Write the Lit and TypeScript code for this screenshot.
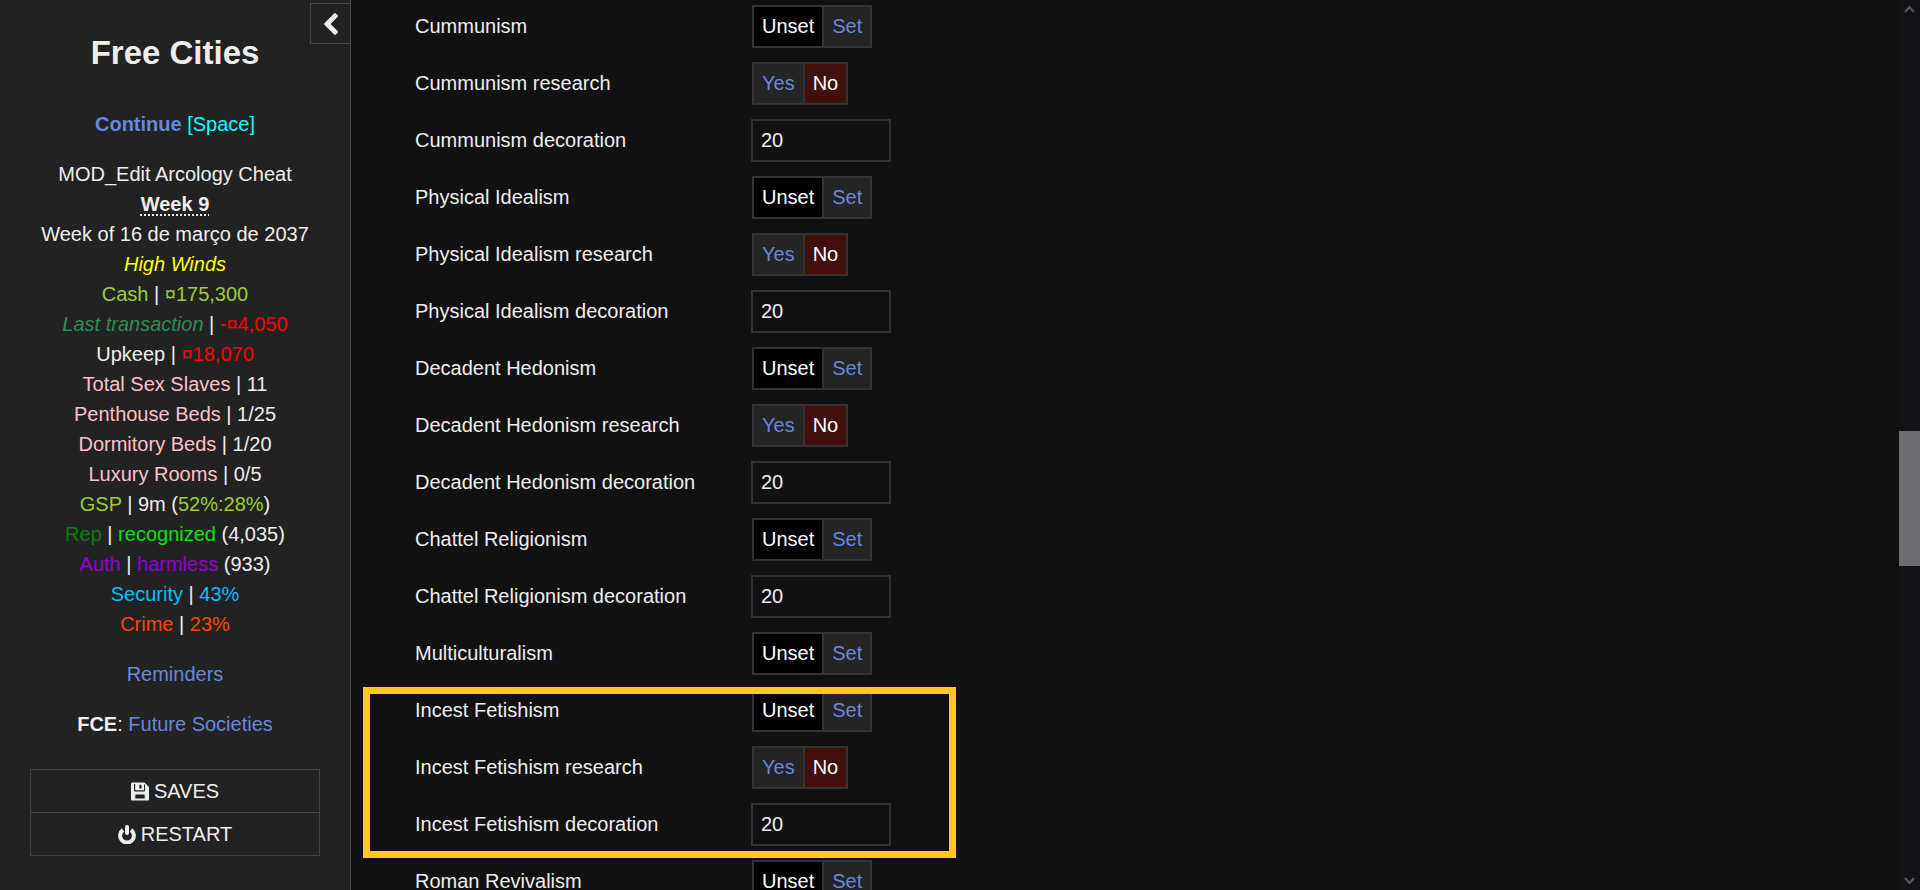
import { LitElement, html, css, svg } from "lit";
import { customElement, property, state } from "lit/decorators.js";
import { classMap } from "lit/directives/class-map.js";

type Kind = "set" | "research" | "decoration";
interface Setting {
  name: string;
  kind: Kind;
}

const settingsOf = (name: string, ...kinds: Kind[]): Setting[] =>
  kinds.map((kind) => ({ name: kind === "set" ? name : `${name} ${kind}`, kind }));

const groups: { highlighted: boolean; settings: Setting[] }[] = [
  {
    highlighted: false,
    settings: [
      ...settingsOf("Cummunism", "set", "research", "decoration"),
      ...settingsOf("Physical Idealism", "set", "research", "decoration"),
      ...settingsOf("Decadent Hedonism", "set", "research", "decoration"),
      ...settingsOf("Chattel Religionism", "set", "decoration"),
      ...settingsOf("Multiculturalism", "set"),
    ],
  },
  { highlighted: true, settings: settingsOf("Incest Fetishism", "set", "research", "decoration") },
  { highlighted: false, settings: settingsOf("Roman Revivalism", "set") },
];

const icons = {
  left: svg`<path d="M1171 301L640 832l531 531q19 19 19 45t-19 45l-166 166q-19 19-45 19t-45-19L173 877q-19-19-19-45t19-45L915 45q19-19 45-19t45 19l166 166q19 19 19 45t-19 45z"/>`,
  floppy: svg`<path fill-rule="evenodd" d="M1 0h12.500L18 4.500V17a1 1 0 0 1-1 1H1a1 1 0 0 1-1-1V1a1 1 0 0 1 1-1zM3 1.500V8q0 1 1 1h9q1 0 1-1V2.500l-1-1V7.700H4.200V1.500zM8.300 2.300V6h2.200V2.300zM4.300 12v4h9.400v-4z"/>`,
  power: svg`<path d="M5 5A6.900 6.900 0 1 0 13 5" fill="none" stroke="#eee" stroke-width="4"/><path d="M9 2V8" fill="none" stroke="#eee" stroke-width="4" stroke-linecap="round"/>`,
};

@customElement("setting-row")
class SettingRow extends LitElement {
  @property({ attribute: false }) setting!: Setting;
  @state() private choice = "";

  static styles = css`
    :host {
      display: grid;
      grid-template-columns: 336px 140px;
      align-items: center;
    }
    .toggle {
      display: flex;
      padding: 0 1px;
    }
    button {
      box-sizing: border-box;
      height: 43px;
      margin: 0;
      padding: 0 8px;
      border: 2px solid #333;
      background: #242424;
      color: #68d;
      font: inherit;
      cursor: pointer;
    }
    button + button {
      border-left: 0;
    }
    .chosen {
      background: #000;
      color: #fff;
    }
    .chosen.no {
      background: #410f0c;
    }
    input {
      box-sizing: border-box;
      width: 100%;
      height: 43px;
      margin: 0;
      padding: 0 8px;
      border: 2px solid #333;
      background: transparent;
      color: #eee;
      font: inherit;
    }
  `;

  render() {
    const { name, kind } = this.setting;
    if (kind === "decoration") {
      return html`<label for="value">${name}</label><input id="value" type="text" value="20" />`;
    }
    const options = kind === "set" ? ["Unset", "Set"] : ["Yes", "No"];
    const current = this.choice || (kind === "set" ? "Unset" : "No");
    return html`
      <span id="name">${name}</span>
      <div class="toggle" role="group" aria-labelledby="name">
        ${options.map(
          (option) => html`<button
            type="button"
            aria-pressed=${option === current}
            class=${classMap({ chosen: option === current, no: option === "No" })}
            @click=${() => (this.choice = option)}
          >${option}</button>`
        )}
      </div>
    `;
  }
}

@customElement("side-bar")
class SideBar extends LitElement {
  static styles = css`
    :host {
      box-sizing: border-box;
      position: relative;
      display: block;
      width: 351px;
      flex: none;
      padding: 34px 30px 0;
      border-right: 1px solid #444;
      background: #222;
      text-align: center;
      line-height: 30px;
    }
    .collapse {
      position: absolute;
      top: 3px;
      right: 0;
      display: flex;
      align-items: center;
      justify-content: center;
      width: 40px;
      height: 41px;
      padding: 0;
      border: 1px solid #444;
      border-right: 0;
      background: transparent;
    }
    svg {
      fill: #eee;
    }
    .chevron {
      width: 16px;
      height: 22px;
    }
    h1 {
      margin: 0 0 37px;
      font-size: 33px;
      line-height: 38px;
    }
    p {
      margin: 0 0 20px;
      white-space: nowrap;
    }
    a {
      color: #68d;
      text-decoration: none;
    }
    abbr {
      font-weight: bold;
      text-decoration: underline dotted;
      text-underline-offset: 3px;
    }
    .key { color: #0ff; }
    .weather { color: #ff0; }
    .cash { color: #9acd32; }
    .last { color: #2e8b57; }
    .loss { color: #f00; }
    .beds { color: pink; }
    .rep { color: #087f08; }
    .known { color: #0de00d; }
    .auth { color: #9400d3; }
    .security { color: #00bfff; }
    .crime { color: #ff4500; }
    .menu {
      margin: 30px 0 0;
      padding: 0;
      border: 1px solid #444;
      list-style: none;
    }
    .menu li + li {
      border-top: 1px solid #444;
    }
    .menu button {
      display: flex;
      align-items: center;
      justify-content: center;
      gap: 5px;
      width: 100%;
      height: 42px;
      padding: 0;
      border: 0;
      background: transparent;
      color: #eee;
      font: inherit;
      text-transform: uppercase;
    }
    .menu svg {
      width: 18px;
      height: 19px;
    }
  `;

  render() {
    return html`
      <button class="collapse" type="button" aria-label="Toggle the side bar">
        <svg class="chevron" viewBox="154 26 1036 1612">${icons.left}</svg>
      </button>
      <h1>Free Cities</h1>
      <p><a href="#"><b>Continue</b></a> <span class="key">[Space]</span></p>
      <p>
        MOD_Edit Arcology Cheat<br />
        <abbr>Week 9</abbr><br />
        Week of 16 de março de 2037<br />
        <em class="weather">High Winds</em><br />
        <span class="cash">Cash</span> | <span class="cash">¤175,300</span><br />
        <em class="last">Last transaction</em> | <span class="loss">-¤4,050</span><br />
        Upkeep | <span class="loss">¤18,070</span><br />
        <span class="beds">Total Sex Slaves</span> | 11<br />
        <span class="beds">Penthouse Beds</span> | 1/25<br />
        <span class="beds">Dormitory Beds</span> | 1/20<br />
        <span class="beds">Luxury Rooms</span> | 0/5<br />
        <span class="cash">GSP</span> | 9m (<span class="cash">52%:28%</span>)<br />
        <span class="rep">Rep</span> | <span class="known">recognized</span> (4,035)<br />
        <span class="auth">Auth</span> | <span class="auth">harmless</span> (933)<br />
        <span class="security">Security</span> | <span class="security">43%</span><br />
        <span class="crime">Crime</span> | <span class="crime">23%</span>
      </p>
      <p><a href="#">Reminders</a></p>
      <p><b>FCE</b>: <a href="#">Future Societies</a></p>
      <ul class="menu">
        <li><button type="button"><svg viewBox="0 0 18 18">${icons.floppy}</svg>Saves</button></li>
        <li><button type="button"><svg viewBox="0 0 18 19">${icons.power}</svg>Restart</button></li>
      </ul>
    `;
  }
}

@customElement("app-root")
class AppRoot extends LitElement {
  static styles = css`
    :host {
      display: flex;
      height: 100vh;
      overflow: hidden;
      background: #111;
      color: #eee;
      font: 20px/23px "Liberation Sans", Arial, sans-serif;
    }
    main {
      flex: 1;
      display: flex;
      flex-direction: column;
      align-items: flex-start;
      gap: 14px;
      padding: 5px 64px 0;
    }
    .group {
      position: relative;
      display: grid;
      gap: 14px;
    }
    .highlighted::after {
      content: "";
      position: absolute;
      inset: -2px -65px -12px -52px;
      border: 7px solid #ffc91a;
      pointer-events: none;
    }
    .scrollbar {
      display: flex;
      flex-direction: column;
      width: 21px;
      background: #131316;
    }
    .arrow {
      width: 21px;
      height: 20px;
      fill: none;
      stroke: #5a5a5c;
      stroke-width: 2;
    }
    .before { flex: 411; }
    .thumb { flex: 135; background: #6e6e70; }
    .after { flex: 304; }
  `;

  render() {
    return html`
      <side-bar></side-bar>
      <main>
        ${groups.map(
          (group) => html`<section class=${classMap({ group: true, highlighted: group.highlighted })}>
            ${group.settings.map((setting) => html`<setting-row .setting=${setting}></setting-row>`)}
          </section>`
        )}
      </main>
      <div class="scrollbar" aria-hidden="true">
        <svg class="arrow" viewBox="0 0 21 20"><path d="M6 12l4.500-5 4.500 5" /></svg>
        <div class="before"></div>
        <div class="thumb"></div>
        <div class="after"></div>
        <svg class="arrow" viewBox="0 0 21 20"><path d="M6 8l4.500 5 4.500-5" /></svg>
      </div>
    `;
  }
}
